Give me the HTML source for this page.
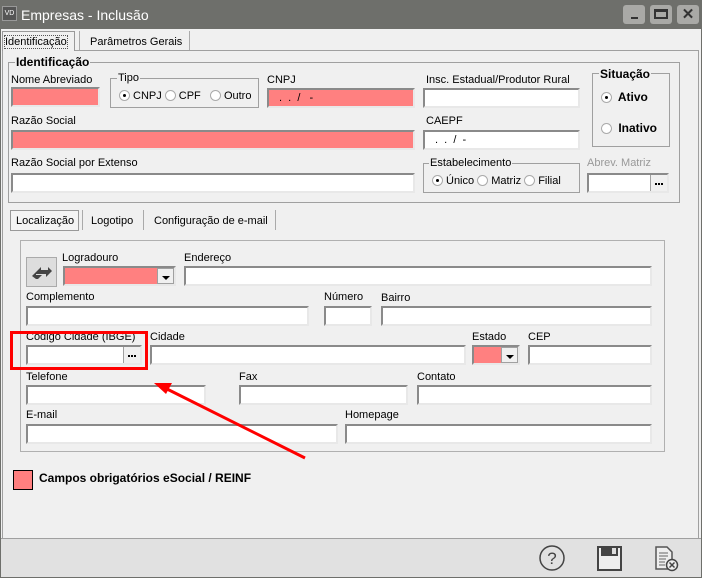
<!DOCTYPE html>
<html><head><meta charset="utf-8"><style>
*{box-sizing:border-box;margin:0;padding:0}
body{width:702px;height:578px;background:#f0f0f0;font-family:"Liberation Sans",sans-serif;font-size:11px;color:#000;position:relative;overflow:hidden}
.a{position:absolute}
.lbl{position:absolute;font-size:11px;white-space:nowrap;line-height:12px}
.in{position:absolute;background:#fff;border:2px solid;border-color:#8a8a8a #e8e8e8 #e8e8e8 #8a8a8a;height:20px}
.pk{background:#ff8080}
.grp{position:absolute;border:1px solid #a0a0a0}
.gt{position:absolute;background:#f0f0f0;padding:0 1px;line-height:12px;white-space:nowrap}
.rad{display:inline-block;width:11px;height:11px;border-radius:50%;border:1px solid #aaa;background:#fff;vertical-align:-2px;position:relative;margin-right:3px}
.rad.on::after{content:"";position:absolute;left:3px;top:3px;width:3px;height:3px;border-radius:50%;background:#000}
.btn3{position:absolute;right:0;top:0;bottom:0;width:17px;background:#f0f0f0;border-left:1px solid #a0a0a0}
.btn3::after{content:"";position:absolute;left:4px;top:8px;width:2px;height:2px;background:#000;box-shadow:3px 0 #000,6px 0 #000}
.dd{position:absolute;right:0;top:0;bottom:0;width:17px;background:#f0f0f0;border:1px solid #a0a0a0}
.dd::after{content:"";position:absolute;left:4px;top:7px;border-left:4px solid transparent;border-right:4px solid transparent;border-top:4px solid #000}
</style></head><body>
<!-- title bar -->
<div class="a" style="left:0;top:0;width:702px;height:29px;background:#6e6f6b"></div>
<div class="a" style="left:2px;top:6px;width:15px;height:15px;background:#555;border:1px solid #999;color:#fff;font-size:7px;line-height:13px;text-align:center">VD</div>
<div class="lbl" style="left:21px;top:7px;font-size:14px;line-height:16px;color:#fff">Empresas - Inclusão</div>
<div class="a" style="left:623px;top:5px;width:22px;height:19px;background:#a9a9a6;border-radius:3px"><div class="a" style="left:8px;top:12px;width:7px;height:2px;background:#333"></div></div>
<div class="a" style="left:650px;top:5px;width:22px;height:19px;background:#a9a9a6;border-radius:3px"><div class="a" style="left:4px;top:4px;width:14px;height:10px;border:2px solid #333;border-top-width:3px"></div></div>
<div class="a" style="left:677px;top:5px;width:22px;height:19px;background:#a9a9a6;border-radius:3px;color:#333;font-weight:bold;font-size:15px;text-align:center;line-height:19px">✕</div>
<!-- window frame -->
<div class="a" style="left:0;top:29px;width:702px;height:549px;border:1px solid #6e6f6b;border-top:none"></div>
<!-- top tabs -->
<div class="a" style="left:2px;top:50px;width:697px;height:488px;border:1px solid #a0a0a0;border-bottom:none"></div>
<div class="a" style="left:2px;top:31px;width:73px;height:20px;border:1px solid #999;background:#f0f0f0;border-bottom:none"></div>
<div class="lbl" style="left:5px;top:36px;outline:1px dotted #555;outline-offset:0">Identificação</div>
<div class="a" style="left:79px;top:31px;width:1px;height:19px;background:#aaa"></div>
<div class="a" style="left:189px;top:31px;width:1px;height:19px;background:#aaa"></div>
<div class="lbl" style="left:90px;top:36px">Parâmetros Gerais</div>
<!-- Identificacao group -->
<div class="grp" style="left:8px;top:62px;width:672px;height:141px"></div>
<div class="gt" style="left:15px;top:56px;font-weight:bold;font-size:12px">Identificação</div>
<div class="lbl" style="left:11px;top:74px">Nome Abreviado</div>
<div class="in pk" style="left:11px;top:87px;width:89px"></div>
<div class="grp" style="left:110px;top:78px;width:149px;height:30px"></div>
<div class="gt" style="left:117px;top:72px">Tipo</div>
<div class="lbl" style="left:119px;top:90px"><span class="rad on"></span>CNPJ <span class="rad"></span>CPF &nbsp; <span class="rad"></span>Outro</div>
<div class="lbl" style="left:267px;top:74px">CNPJ</div>
<div class="in pk" style="left:267px;top:88px;width:148px;padding-left:10px;line-height:16px">. &nbsp;. &nbsp;/ &nbsp; -</div>
<div class="lbl" style="left:426px;top:74px">Insc. Estadual/Produtor Rural</div>
<div class="in" style="left:423px;top:88px;width:157px"></div>
<div class="grp" style="left:592px;top:73px;width:78px;height:74px"></div>
<div class="gt" style="left:599px;top:68px;font-weight:bold;font-size:12px">Situação</div>
<div class="lbl" style="left:601px;top:91px;font-weight:bold;font-size:12px"><span class="rad on"></span> Ativo</div>
<div class="lbl" style="left:601px;top:122px;font-weight:bold;font-size:12px"><span class="rad"></span> Inativo</div>
<div class="lbl" style="left:11px;top:115px">Razão Social</div>
<div class="in pk" style="left:11px;top:130px;width:404px"></div>
<div class="lbl" style="left:426px;top:115px">CAEPF</div>
<div class="in" style="left:423px;top:130px;width:157px;padding-left:10px;line-height:16px">. &nbsp;. &nbsp;/ &nbsp;-</div>
<div class="lbl" style="left:11px;top:157px">Razão Social por Extenso</div>
<div class="in" style="left:11px;top:173px;width:404px"></div>
<div class="grp" style="left:423px;top:163px;width:157px;height:30px"></div>
<div class="gt" style="left:429px;top:157px">Estabelecimento</div>
<div class="lbl" style="left:432px;top:175px"><span class="rad on"></span>Único <span class="rad"></span>Matriz <span class="rad"></span>Filial</div>
<div class="lbl" style="left:587px;top:157px;color:#999">Abrev. Matriz</div>
<div class="in" style="left:587px;top:173px;width:82px"><div class="btn3"></div></div>
<!-- second tabs -->
<div class="a" style="left:10px;top:210px;width:69px;height:21px;border:1px solid #999;background:#f4f4f4"></div>
<div class="lbl" style="left:16px;top:215px">Localização</div>
<div class="a" style="left:82px;top:210px;width:1px;height:20px;background:#aaa"></div>
<div class="lbl" style="left:91px;top:215px">Logotipo</div>
<div class="a" style="left:143px;top:210px;width:1px;height:20px;background:#aaa"></div>
<div class="lbl" style="left:154px;top:215px">Configuração de e-mail</div>
<div class="a" style="left:275px;top:210px;width:1px;height:20px;background:#aaa"></div>
<!-- inner panel -->
<div class="grp" style="left:20px;top:240px;width:645px;height:212px;border-color:#b0b0b0"></div>
<div class="a" style="left:26px;top:257px;width:31px;height:30px;background:#ddd;border:1px solid #aaa"><svg width="29" height="28" viewBox="0 0 29 28"><path d="M7 16 L14 9 L14 12 L21 12 L21 9 L25 13 L19 19 L19 16 Z M5 18 L9 14 L9 17 L15 17 L11 21 L9 21 Z" fill="#444"/></svg></div>
<div class="lbl" style="left:62px;top:252px">Logradouro</div>
<div class="in pk" style="left:63px;top:266px;width:113px"><div class="dd"></div></div>
<div class="lbl" style="left:184px;top:252px">Endereço</div>
<div class="in" style="left:184px;top:266px;width:468px"></div>
<div class="lbl" style="left:26px;top:291px">Complemento</div>
<div class="in" style="left:26px;top:306px;width:283px"></div>
<div class="lbl" style="left:324px;top:291px">Número</div>
<div class="in" style="left:324px;top:306px;width:48px"></div>
<div class="lbl" style="left:381px;top:292px">Bairro</div>
<div class="in" style="left:381px;top:306px;width:271px"></div>
<div class="lbl" style="left:26px;top:331px">Código Cidade (IBGE)</div>
<div class="in" style="left:26px;top:345px;width:116px"><div class="btn3"></div></div>
<div class="lbl" style="left:150px;top:331px">Cidade</div>
<div class="in" style="left:150px;top:345px;width:316px"></div>
<div class="lbl" style="left:472px;top:331px">Estado</div>
<div class="in pk" style="left:472px;top:345px;width:48px"><div class="dd"></div></div>
<div class="lbl" style="left:528px;top:331px">CEP</div>
<div class="in" style="left:528px;top:345px;width:124px"></div>
<div class="a" style="left:10px;top:331px;width:138px;height:39px;border:3px solid #f00"></div>
<div class="lbl" style="left:26px;top:371px">Telefone</div>
<div class="in" style="left:26px;top:385px;width:180px"></div>
<div class="lbl" style="left:239px;top:371px">Fax</div>
<div class="in" style="left:239px;top:385px;width:169px"></div>
<div class="lbl" style="left:417px;top:371px">Contato</div>
<div class="in" style="left:417px;top:385px;width:235px"></div>
<div class="lbl" style="left:26px;top:409px">E-mail</div>
<div class="in" style="left:26px;top:424px;width:312px"></div>
<div class="lbl" style="left:345px;top:409px">Homepage</div>
<div class="in" style="left:345px;top:424px;width:307px"></div>
<svg class="a" style="left:0;top:0" width="702" height="578"><line x1="305" y1="458" x2="165" y2="388" stroke="#f00" stroke-width="3"/><path d="M154 383 L172 383 L166 394 Z" fill="#f00"/></svg>
<!-- legend -->
<div class="a" style="left:13px;top:470px;width:20px;height:20px;background:#ff8080;border:1px solid #000"></div>
<div class="lbl" style="left:39px;top:472px;font-weight:bold;font-size:12px">Campos obrigatórios eSocial / REINF</div>
<!-- footer -->
<div class="a" style="left:1px;top:538px;width:700px;height:39px;background:#e1e1e1;border-top:1px solid #a0a0a0"></div>
<svg class="a" style="left:538px;top:544px" width="28" height="28"><circle cx="14" cy="14" r="12" fill="none" stroke="#444" stroke-width="1.5"/><text x="14" y="20" text-anchor="middle" font-family="Liberation Sans" font-size="17" fill="#444">?</text></svg>
<svg class="a" style="left:596px;top:545px" width="28" height="27"><rect x="2" y="2" width="23" height="23" fill="#eee" stroke="#444" stroke-width="2"/><rect x="5" y="2" width="17" height="9" fill="#444"/><rect x="16" y="3" width="4" height="6" fill="#ddd"/></svg>
<svg class="a" style="left:654px;top:545px" width="26" height="28"><path d="M2 2 H13 L18 7 V24 H2 Z" fill="#eee" stroke="#555" stroke-width="1.5"/><path d="M5 8 H14 M5 11 H14 M5 14 H12 M5 17 H11 M5 20 H11" stroke="#666"/><circle cx="18" cy="20" r="5.5" fill="#eee" stroke="#444" stroke-width="1.5"/><path d="M15.5 17.5 L20.5 22.5 M20.5 17.5 L15.5 22.5" stroke="#444" stroke-width="1.5"/></svg>
</body></html>
